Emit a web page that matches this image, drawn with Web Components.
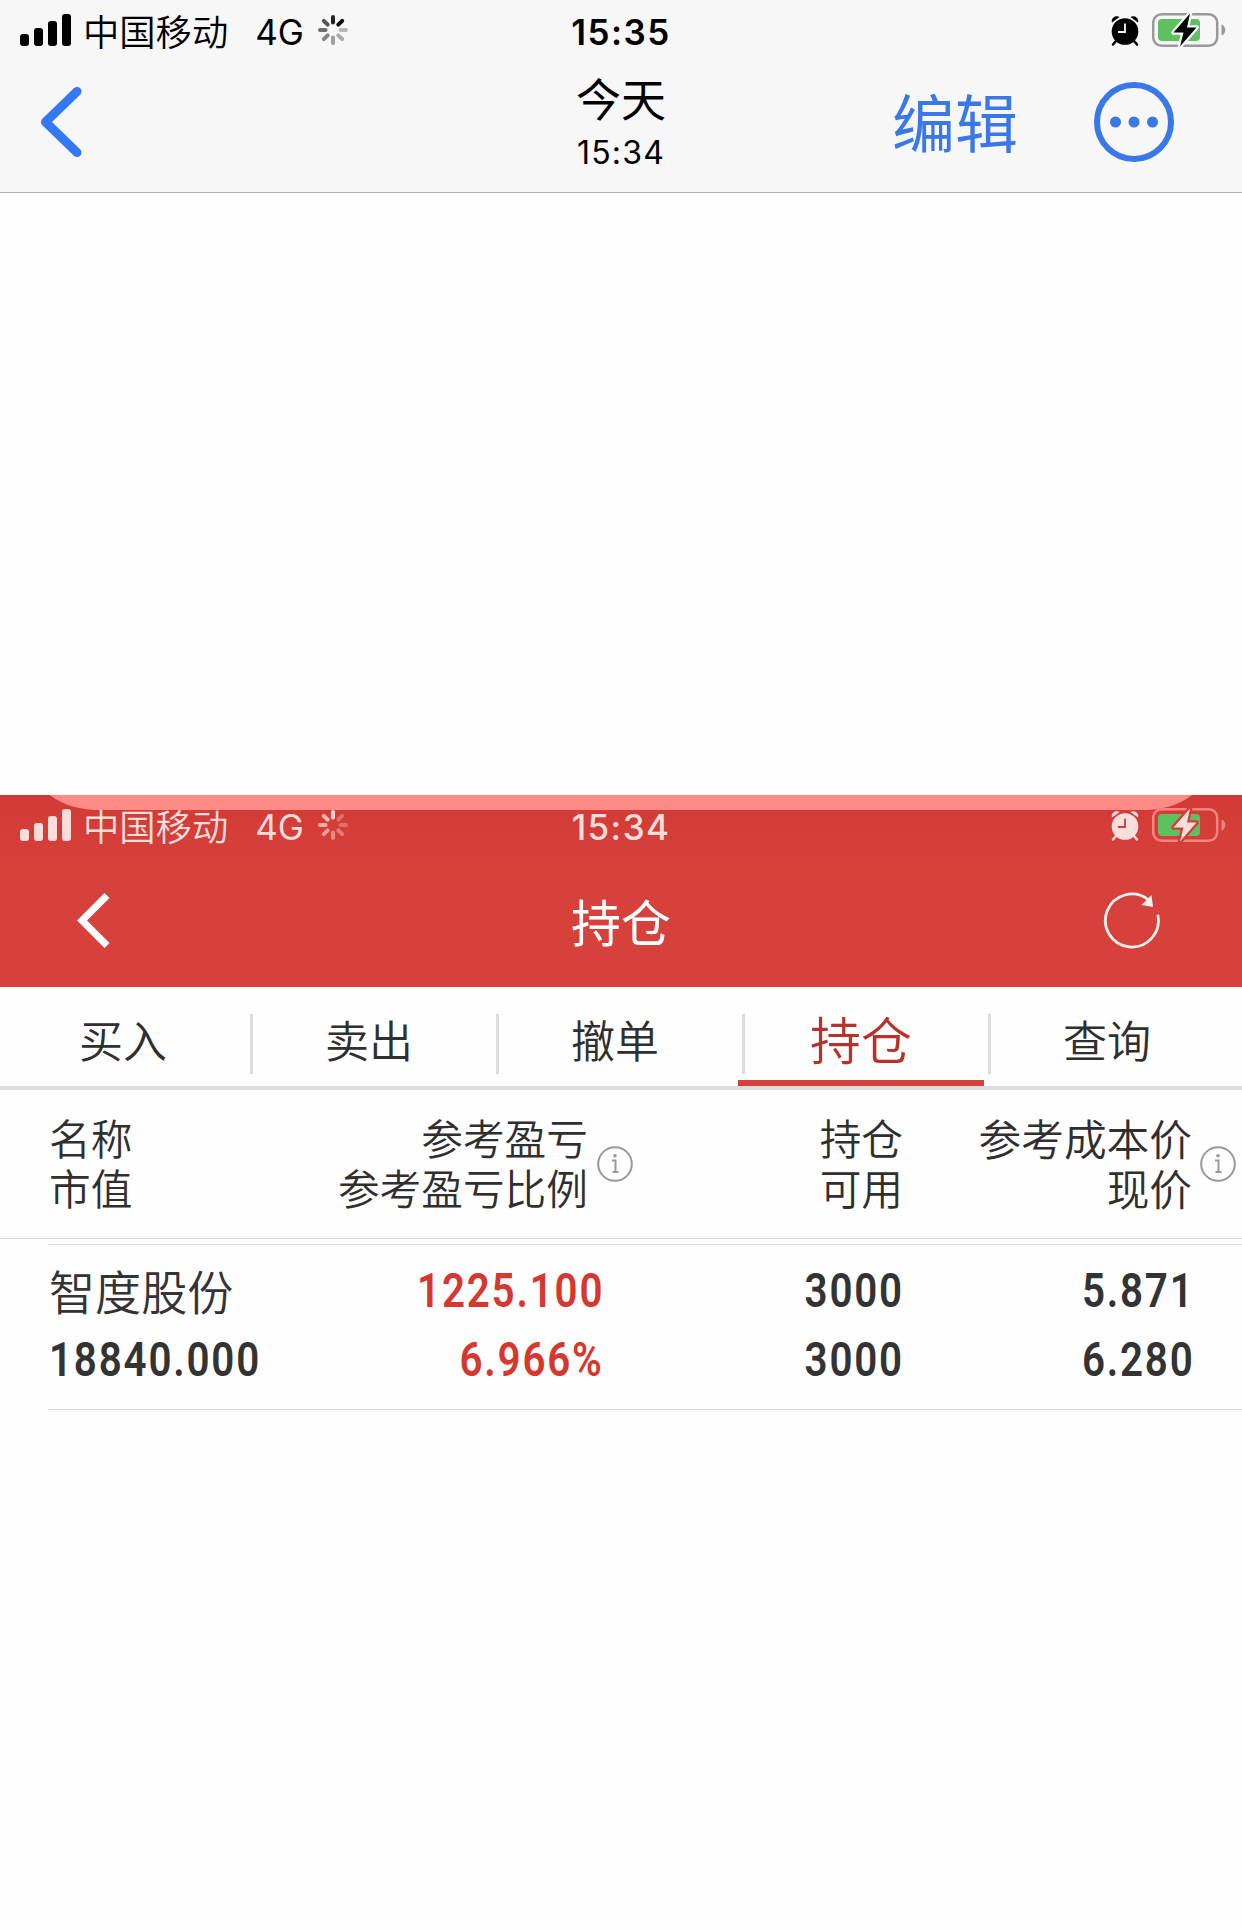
<!DOCTYPE html>
<html lang="zh-CN">
<head>
<meta charset="utf-8">
<title>持仓</title>
<style>
    html, body {
        margin: 0;
        background: #fefefe;
    }

    body {
        font-family: Inter, "Noto Sans CJK SC", sans-serif;
        color: #000;
        overflow: hidden;
    }
</style>
</head>
<body>
<photo-viewer>
    <photo-nav slot="nav" day="今天" time="15:34" action="编辑">
        <status-bar time="15:35"></status-bar>
    </photo-nav>
    <trade-header caption="持仓">
        <status-bar time="15:34" light></status-bar>
    </trade-header>
    <trade-tabs>
        <trade-tab>买入</trade-tab>
        <trade-tab>卖出</trade-tab>
        <trade-tab>撤单</trade-tab>
        <trade-tab active>持仓</trade-tab>
        <trade-tab>查询</trade-tab>
    </trade-tabs>
    <position-head></position-head>
    <position-row name="智度股份" worth="18840.000" profit="1225.100" ratio="6.966%" held="3000" usable="3000" cost="5.871" price="6.280"></position-row>
</photo-viewer>

<script>
class BaseElement extends HTMLElement {
    connectedCallback() {
        if (this.shadowRoot) return;
        this.attachShadow({ mode: "open" });
        this.shadowRoot.innerHTML = this.render();
    }

    attr(name) {
        return this.getAttribute(name) || "";
    }
}

class PhotoViewer extends BaseElement {
    render() {
        return `
            <style>
                :host {
                    display: block;
                    width: 1242px;
                    height: 1930px;
                    overflow: hidden;
                }

                .photo {
                    margin-top: 602px;
                }
            </style>
            <slot name="nav"></slot>
            <div class="photo"><slot></slot></div>
        `;
    }
}

class StatusBar extends BaseElement {
    render() {
        const light = this.hasAttribute("light");
        const hole = light ? "#d43c37" : "#f7f7f7";
        // opacity of each spinner blade, clockwise from the top
        const blades = light ? [0.95, 0.3, 0.32, 0.38, 0.48, 0.6, 0.7, 0.8] : [0.85, 0.95, 0.25, 0.3, 0.35, 0.45, 0.55, 0.65];

        return `
            <style>
                :host {
                    display: grid;
                    grid-template-columns: 1fr auto 1fr;
                    height: 60px;
                    color: ${light ? "#fbdddb" : "#000"};
                    position: relative;
                    z-index: 1;
                }

                svg {
                    display: block;
                    flex: none;
                }

                .left, .right {
                    display: flex;
                }

                .left {
                    padding-left: 20px;
                }

                .carrier {
                    margin-left: 11px;
                    padding-top: 6px;
                    font: 350 36.3px/48px "Noto Sans CJK SC", sans-serif;
                    white-space: nowrap;
                }

                .network {
                    margin: 8px 0 0 27px;
                    font-size: 35px;
                    line-height: 48px;
                }

                .spinner {
                    margin: 14px 0 0 13px;
                }

                .time {
                    padding-top: 8px;
                    font-size: 35px;
                    line-height: 48px;
                    font-weight: ${light ? 500 : 600};
                    letter-spacing: 1.4px;
                }

                .right {
                    justify-content: flex-end;
                    padding-right: 16px;
                }

                .alarm {
                    margin: 15px 13px 0 0;
                }

                .battery {
                    margin-top: 11px;
                }
            </style>
            <div class="left">
                <svg width="52" height="48" fill="currentColor">
                    <rect y="34" width="9" height="12" rx="3"/>
                    <rect x="14" y="28" width="9" height="18" rx="3"/>
                    <rect x="28" y="21" width="9" height="25" rx="3"/>
                    <rect x="42" y="14" width="9" height="32" rx="3"/>
                </svg>
                <span class="carrier">中国移动</span>
                <span class="network">4G</span>
                <svg class="spinner" width="32" height="32" viewBox="-16 -16 32 32" stroke="currentColor" stroke-width="4" stroke-linecap="round">
                    ${blades.map((o, i) => `<path d="M0-7.5V-13" transform="rotate(${i * 45})" opacity="${o}"/>`).join("")}
                </svg>
            </div>
            <span class="time">${this.attr("time")}</span>
            <div class="right">
                <svg class="alarm" width="28" height="32" viewBox="0 0 28 32" fill="currentColor">
                    <circle cx="14" cy="16.5" r="13.3"/>
                    <path d="M1 7.5C-.5 3 5 -.5 8.6 2zM27 7.5C28.500 3 23-.5 19.400 2z"/>
                    <path d="M5 26l-3 3.500M23 26l3 3.500" stroke="currentColor" stroke-width="2.500" stroke-linecap="round"/>
                    <path d="M14 8.500v8.500H7" fill="none" stroke="${hole}" stroke-width="1.800"/>
                </svg>
                <svg class="battery" width="74" height="38" viewBox="0 0 74 38">
                    <rect x="1.200" y="3.200" width="64" height="31.600" rx="8.500" fill="none" stroke="${light ? "#f58482" : "#999"}" stroke-width="2.500"/>
                    <path d="M69.500 13.500c5 1.500 5 9.500 0 11z" fill="${light ? "#ef8582" : "#999"}"/>
                    <rect x="6" y="8" width="42" height="22" rx="4" fill="#5fc062"/>
                    <path d="M38 2.500L21.500 21.500h10L28 35.500 44.500 16.500H35z" fill="currentColor" stroke="${hole}" stroke-width="4.500" stroke-linejoin="round" paint-order="stroke"/>
                </svg>
            </div>
        `;
    }
}

class PhotoNav extends BaseElement {
    render() {
        return `
            <style>
                :host {
                    display: block;
                    height: 193px;
                    box-sizing: border-box;
                    background: #f7f7f7;
                    border-bottom: 1px solid #adadad;
                }

                .bar {
                    display: grid;
                    grid-template-columns: 1fr auto 1fr;
                    height: 132px;
                }

                svg {
                    display: block;
                }

                .back {
                    margin: 24px 0 0 38px;
                }

                .title {
                    text-align: center;
                }

                .day {
                    font: 400 45px/56px "Noto Sans CJK SC", sans-serif;
                    margin-top: 10px;
                }

                .time {
                    font-size: 32px;
                    line-height: 40px;
                    margin-top: 7px;
                    letter-spacing: 1.2px;
                }

                .actions {
                    display: flex;
                    justify-content: flex-end;
                    padding-right: 67px;
                    color: #3a78e7;
                }

                .edit {
                    font: 400 63px/80px "Noto Sans CJK SC", sans-serif;
                    margin: 20px 75px 0 0;
                }

                .more {
                    margin-top: 21px;
                }
            </style>
            <slot></slot>
            <div class="bar">
                <svg class="back" width="48" height="76" fill="none" stroke="#3478f6" stroke-width="9" stroke-linecap="round" stroke-linejoin="round">
                    <path d="M39 7.500L7.500 38 39 68.500"/>
                </svg>
                <div class="title">
                    <div class="day">${this.attr("day")}</div>
                    <div class="time">${this.attr("time")}</div>
                </div>
                <div class="actions">
                    <span class="edit">${this.attr("action")}</span>
                    <svg class="more" width="82" height="82" fill="currentColor">
                        <circle cx="41" cy="41" r="37" fill="none" stroke="currentColor" stroke-width="6"/>
                        <circle cx="22.500" cy="41" r="5.500"/>
                        <circle cx="41" cy="41" r="5.500"/>
                        <circle cx="59.500" cy="41" r="5.500"/>
                    </svg>
                </div>
            </div>
        `;
    }
}

class TradeHeader extends BaseElement {
    render() {
        return `
            <style>
                :host {
                    display: block;
                    position: relative;
                    height: 192px;
                    color: #fff;
                    background: linear-gradient(#d33a36, #d6423b 50%, #d6423b);
                }

                /* edge of the banner left over behind the status bar */
                .banner {
                    position: absolute;
                    top: 0;
                    left: 50px;
                }

                .bar {
                    display: grid;
                    grid-template-columns: 1fr auto 1fr;
                    height: 132px;
                }

                svg {
                    display: block;
                }

                .back {
                    margin: 37px 0 0 76px;
                }

                .caption {
                    font: 400 50px/72px "Noto Sans CJK SC", sans-serif;
                    padding-top: 29px;
                }

                .refresh {
                    justify-self: end;
                    margin: 36px 80px 0 0;
                }
            </style>
            <svg class="banner" width="1142" height="15" viewBox="0 0 1142 15">
                <path d="M0 0C10 8 25 14 45 15H1097C1117 14 1132 8 1142 0z" fill="#ff8b87"/>
            </svg>
            <slot></slot>
            <div class="bar">
                <svg class="back" width="36" height="58" fill="none" stroke="#fff" stroke-width="7">
                    <path d="M31 3.500L6 28.500 31 53.500"/>
                </svg>
                <div class="caption">${this.attr("caption")}</div>
                <svg class="refresh" width="60" height="60" fill="none" stroke="#fff0ee" stroke-width="2.800">
                    <path d="M56 25A26.500 26.500 0 1 1 46 8.500" stroke-linecap="round"/>
                    <path d="M39.500 14L49.500 4 51 16z" fill="#fff0ee" stroke="none"/>
                </svg>
            </div>
        `;
    }
}

class TradeTabs extends BaseElement {
    render() {
        return `
            <style>
                :host {
                    display: flex;
                    height: 103px;
                    box-sizing: border-box;
                    border-bottom: 4px solid #ddd;
                    padding-right: 12px;
                }
            </style>
            <slot></slot>
        `;
    }
}

class TradeTab extends BaseElement {
    render() {
        return `
            <style>
                :host {
                    display: flex;
                    box-sizing: border-box;
                    width: 246px;
                    height: 99px;
                    justify-content: center;
                    position: relative;
                    font: 350 44px/60px "Noto Sans CJK SC", sans-serif;
                    color: #2f2f2f;
                    padding-top: 22px;
                }

                :host([active]) {
                    font-size: 51px;
                    font-weight: 350;
                    color: #b73329;
                    padding-top: 21px;
                    border-bottom: 6px solid #d6423b;
                }

                :host(:not(:last-child))::after {
                    content: "";
                    position: absolute;
                    right: -7px;
                    top: 27px;
                    width: 3px;
                    height: 60px;
                    background: #dcdcdc;
                }
            </style>
            <slot></slot>
        `;
    }
}

class InfoIcon extends BaseElement {
    render() {
        return `
            <style>
                :host {
                    display: block;
                    width: 36px;
                    height: 36px;
                }

                svg {
                    display: block;
                }
            </style>
            <svg width="36" height="36" fill="none" stroke="#999" stroke-width="2">
                <circle cx="18" cy="18" r="16.800"/>
                <path d="M15 14.500h3.500V26M15.500 26h6"/>
                <circle cx="18" cy="9.800" r="1.800" fill="#999" stroke="none"/>
            </svg>
        `;
    }
}

class PositionHead extends BaseElement {
    render() {
        return `
            <style>
                :host {
                    display: grid;
                    grid-template-columns: 280px 259px 315px 289px 44px;
                    height: 149px;
                    box-sizing: border-box;
                    padding: 26px 0 0 49px;
                    border-bottom: 1px solid #dadada;
                    font: 350 41.7px/50px "Liberation Sans", "Noto Sans CJK SC", sans-serif;
                    color: #2f2f2f;
                    white-space: nowrap;
                }

                .end {
                    display: flex;
                    flex-direction: column;
                    align-items: flex-end;
                }

                .held {
                    display: grid;
                    grid-template-columns: 45px 1fr;
                }

                info-icon {
                    margin: 30px 0 0 9px;
                }

                .cost {
                    font-size: 42.7px;
                }

                .cost + info-icon {
                    margin-left: 8px;
                }
            </style>
            <div>名称<br>市值</div>
            <div class="end"><span>参考盈亏</span><span>参考盈亏比例</span></div>
            <div class="held">
                <info-icon></info-icon>
                <div class="end"><span>持仓</span><span>可用</span></div>
            </div>
            <div class="end cost"><span>参考成本价</span><span>现价</span></div>
            <info-icon></info-icon>
        `;
    }
}

class PositionRow extends BaseElement {
    render() {
        return `
            <style>
                :host {
                    display: grid;
                    grid-template-columns: 292px 262px 300px 290px;
                    margin: 5px 0 0 48px;
                    height: 166px;
                    box-sizing: border-box;
                    padding-top: 12px;
                    border-top: 1px solid #dadada;
                    border-bottom: 1px solid #dadada;
                    color: #333;
                }

                div {
                    display: flex;
                    flex-direction: column;
                    align-items: flex-end;
                }

                .stock {
                    align-items: flex-start;
                    padding-left: 1px;
                }

                .name {
                    font: 350 46.1px/69px "Liberation Sans", "Noto Sans CJK SC", sans-serif;
                    padding-top: 3px;
                    margin-bottom: -3px;
                }

                /* narrow digits */
                .num {
                    font: 600 47.5px/69px Roboto, sans-serif;
                    letter-spacing: 2.1px;
                    margin-right: -2.1px;
                    transform: scaleX(0.85);
                    transform-origin: right;
                }

                .stock .num {
                    transform-origin: left;
                }

                .profit {
                    color: #d6372e;
                }
            </style>
            <div class="stock"><span class="name">${this.attr("name")}</span><span class="num">${this.attr("worth")}</span></div>
            <div class="profit"><span class="num">${this.attr("profit")}</span><span class="num">${this.attr("ratio")}</span></div>
            <div><span class="num">${this.attr("held")}</span><span class="num">${this.attr("usable")}</span></div>
            <div><span class="num">${this.attr("cost")}</span><span class="num">${this.attr("price")}</span></div>
        `;
    }
}

customElements.define("photo-viewer", PhotoViewer);
customElements.define("status-bar", StatusBar);
customElements.define("photo-nav", PhotoNav);
customElements.define("trade-header", TradeHeader);
customElements.define("trade-tabs", TradeTabs);
customElements.define("trade-tab", TradeTab);
customElements.define("info-icon", InfoIcon);
customElements.define("position-head", PositionHead);
customElements.define("position-row", PositionRow);
</script>
</body>
</html>
